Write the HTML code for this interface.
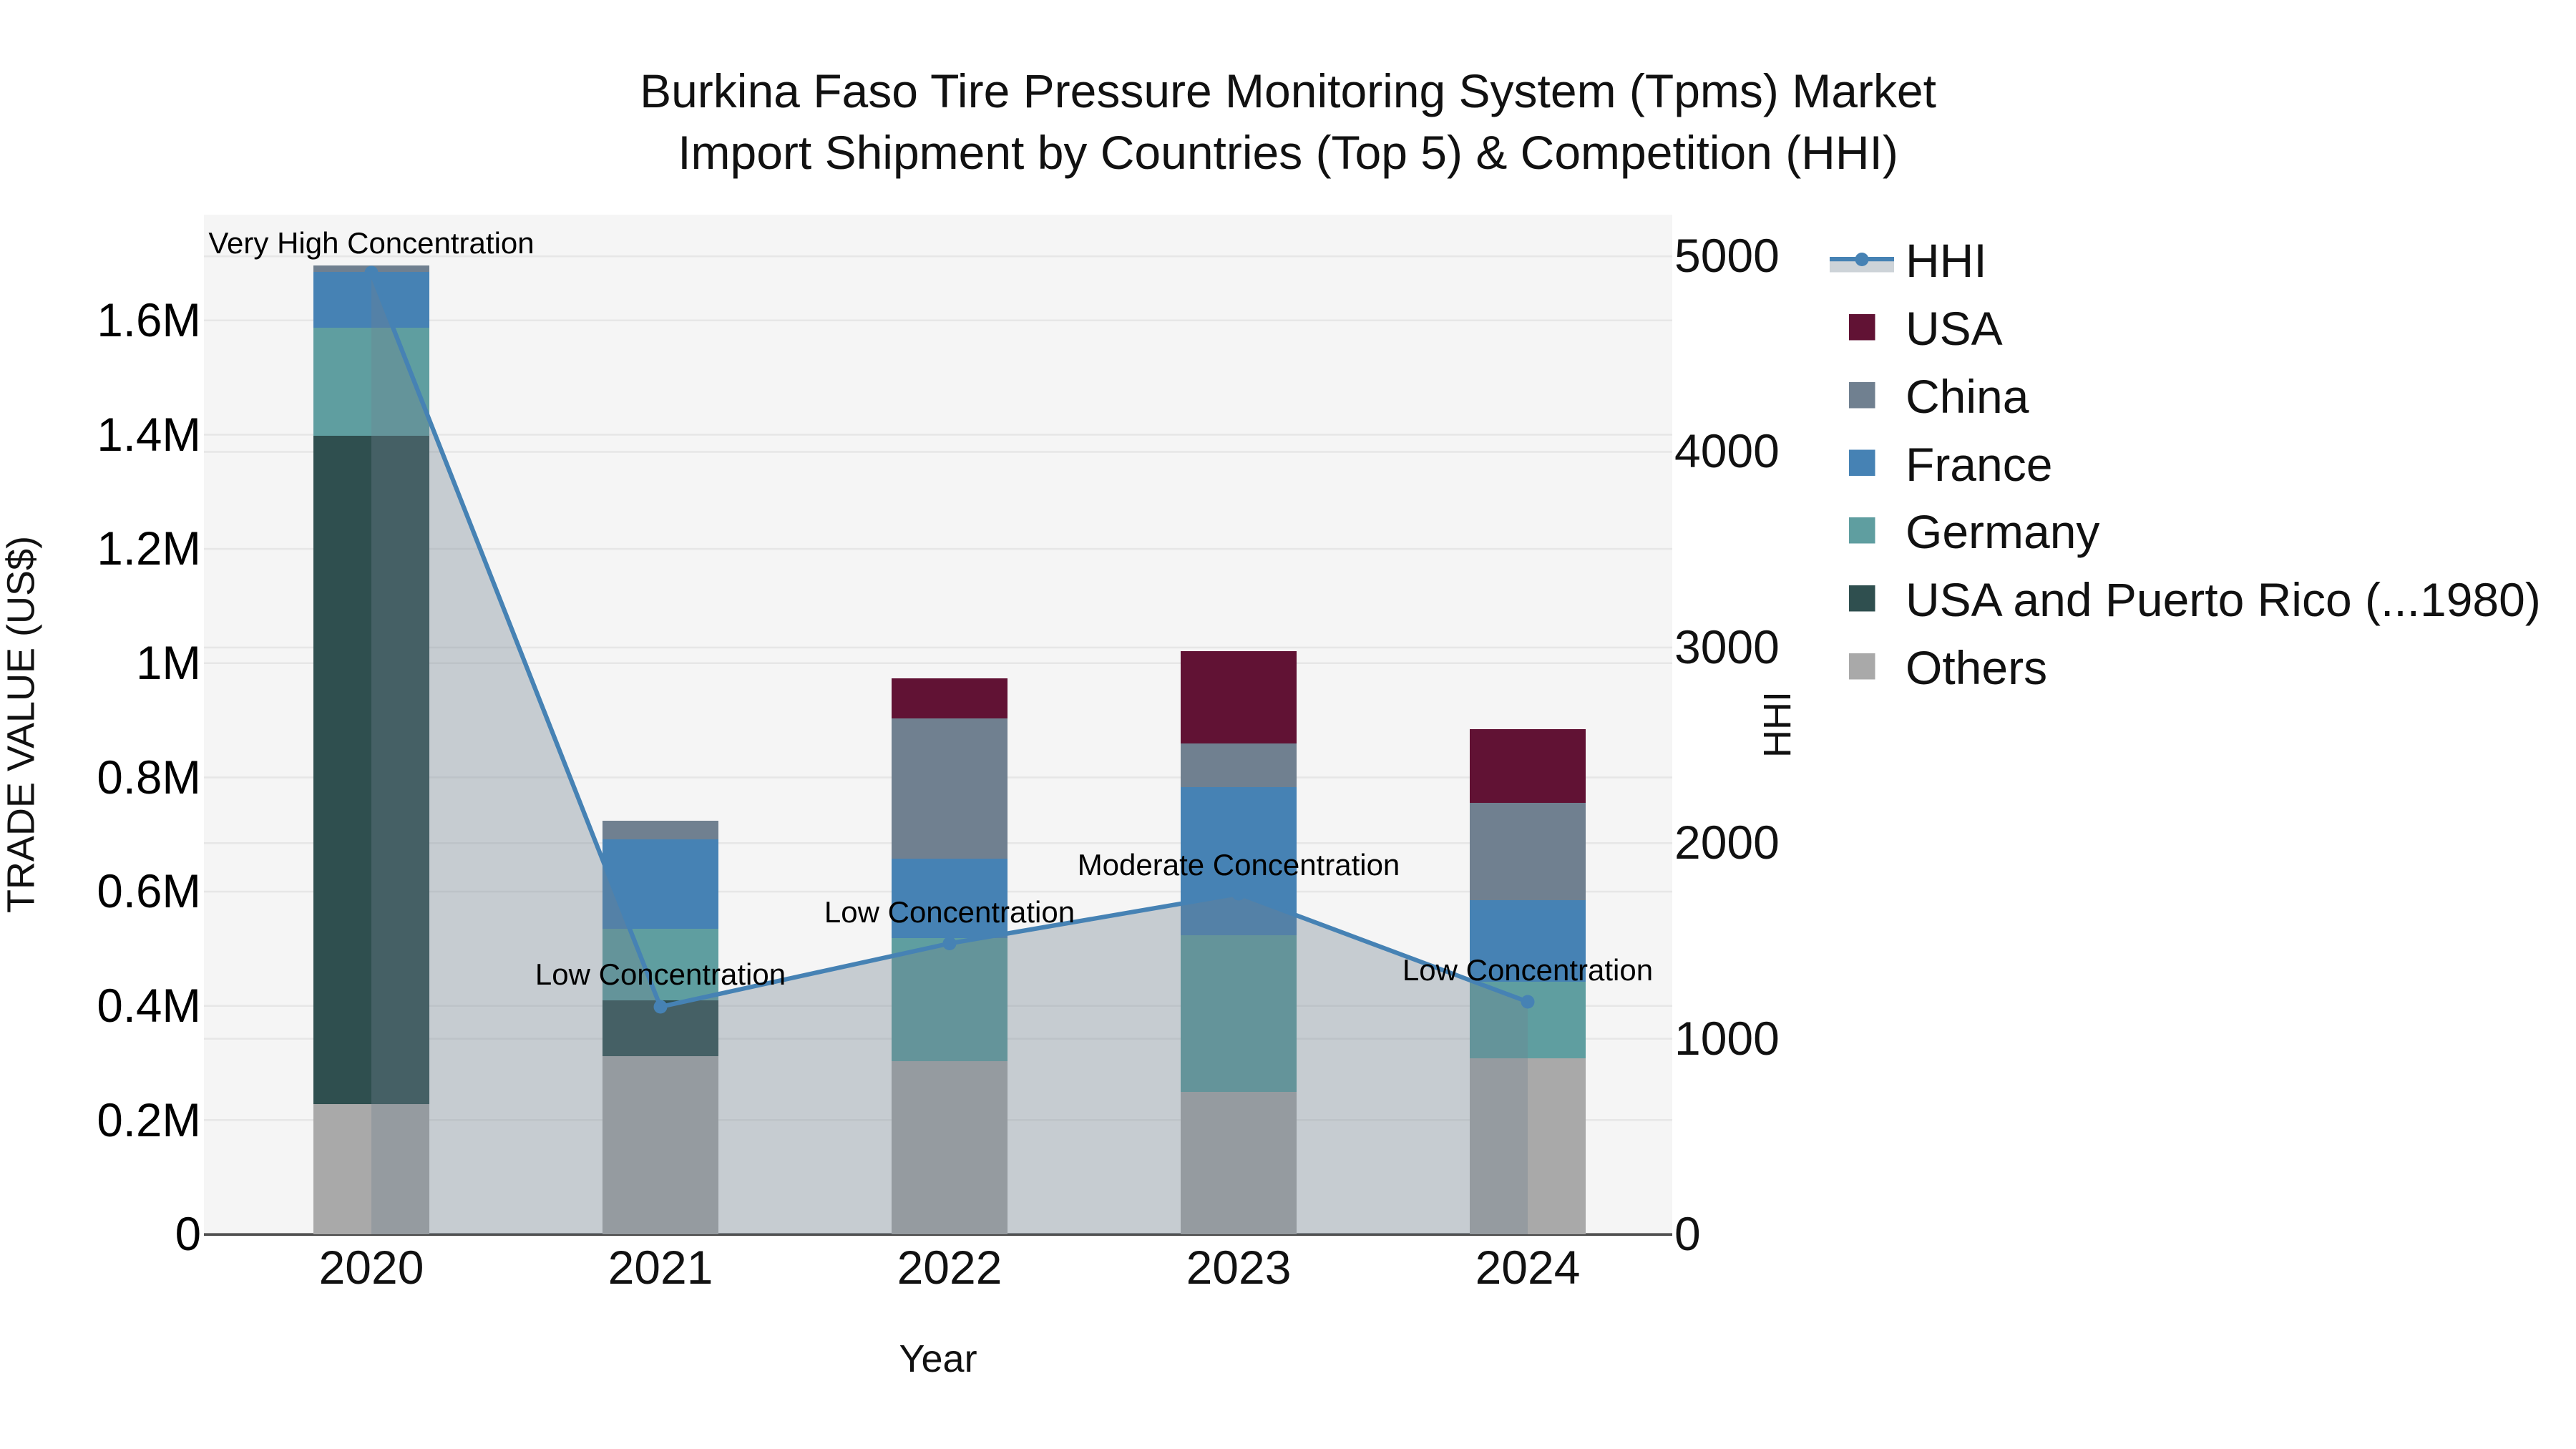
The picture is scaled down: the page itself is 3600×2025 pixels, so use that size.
<!DOCTYPE html>
<html lang="en">
<head>
<meta charset="utf-8">
<title>Burkina Faso Tire Pressure Monitoring System (Tpms) Market</title>
<style>
html,body{margin:0;padding:0;background:#fff;width:3600px;height:2025px;overflow:hidden}
svg{display:block}
text{font-family:"Liberation Sans",Arial,sans-serif;white-space:pre}
.t{font-size:66px;fill:#111}
.l{font-size:65.5px;fill:#000;text-anchor:end}
.c{text-anchor:middle}
.a{font-size:42px;fill:#000;text-anchor:middle}
.ax{font-size:54px;fill:#111;text-anchor:middle}
.ti{font-size:66px;fill:#111;text-anchor:middle}
</style>
</head>
<body>
<svg xmlns="http://www.w3.org/2000/svg" width="3600" height="2025" viewBox="0 0 3600 2025">
<rect width="3600" height="2025" fill="#fff"/>
<rect x="285" y="300" width="2052" height="1427" fill="#f5f5f5"/>

<!-- grid -->
<g fill="#e6e6e6">
<rect x="285" y="357" width="2052" height="2.5"/>
<rect x="285" y="446.5" width="2052" height="2.5"/>
<rect x="285" y="606.2" width="2052" height="2.5"/>
<rect x="285" y="630.2" width="2052" height="2.5"/>
<rect x="285" y="765.8" width="2052" height="2.5"/>
<rect x="285" y="903.7" width="2052" height="2.5"/>
<rect x="285" y="925.5" width="2052" height="2.5"/>
<rect x="285" y="1085.2" width="2052" height="2.5"/>
<rect x="285" y="1177" width="2052" height="2.5"/>
<rect x="285" y="1244.8" width="2052" height="2.5"/>
<rect x="285" y="1404.5" width="2052" height="2.5"/>
<rect x="285" y="1450.4" width="2052" height="2.5"/>
<rect x="285" y="1564" width="2052" height="2.5"/>
</g>
<rect x="285" y="1723" width="2052" height="2" fill="#777"/>
<rect x="285" y="1725" width="2052" height="2" fill="#444"/>

<!-- bars -->
<g shape-rendering="crispEdges">
<!-- 2020 -->
<rect x="438" y="371" width="162" height="9" fill="#708090"/>
<rect x="438" y="380" width="162" height="78" fill="#4682b4"/>
<rect x="438" y="458" width="162" height="151" fill="#5f9ea0"/>
<rect x="438" y="609" width="162" height="934" fill="#2f4f4f"/>
<rect x="438" y="1543" width="162" height="182" fill="#a9a9a9"/>
<!-- 2021 -->
<rect x="842" y="1147" width="162" height="26" fill="#708090"/>
<rect x="842" y="1173" width="162" height="125" fill="#4682b4"/>
<rect x="842" y="1298" width="162" height="100" fill="#5f9ea0"/>
<rect x="842" y="1398" width="162" height="78" fill="#2f4f4f"/>
<rect x="842" y="1476" width="162" height="249" fill="#a9a9a9"/>
<!-- 2022 -->
<rect x="1246" y="948" width="162" height="56" fill="#611234"/>
<rect x="1246" y="1004" width="162" height="196" fill="#708090"/>
<rect x="1246" y="1200" width="162" height="111" fill="#4682b4"/>
<rect x="1246" y="1311" width="162" height="172" fill="#5f9ea0"/>
<rect x="1246" y="1483" width="162" height="242" fill="#a9a9a9"/>
<!-- 2023 -->
<rect x="1650" y="910" width="162" height="129" fill="#611234"/>
<rect x="1650" y="1039" width="162" height="61" fill="#708090"/>
<rect x="1650" y="1100" width="162" height="207" fill="#4682b4"/>
<rect x="1650" y="1307" width="162" height="219" fill="#5f9ea0"/>
<rect x="1650" y="1526" width="162" height="199" fill="#a9a9a9"/>
<!-- 2024 -->
<rect x="2054" y="1019" width="162" height="103" fill="#611234"/>
<rect x="2054" y="1122" width="162" height="136" fill="#708090"/>
<rect x="2054" y="1258" width="162" height="114" fill="#4682b4"/>
<rect x="2054" y="1372" width="162" height="107" fill="#5f9ea0"/>
<rect x="2054" y="1479" width="162" height="246" fill="#a9a9a9"/>
</g>

<!-- HHI area + line -->
<path d="M519 381 L923 1407 L1327 1318.5 L1731 1249 L2135 1400 L2135 1725 L519 1725 Z" fill="#708090" fill-opacity="0.35"/>
<path d="M519 381 L923 1407 L1327 1318.5 L1731 1249 L2135 1400" fill="none" stroke="#4682b4" stroke-width="6.2" stroke-linejoin="round"/>
<g fill="#4682b4">
<circle cx="519" cy="381" r="9.5"/>
<circle cx="923" cy="1407" r="9.5"/>
<circle cx="1327" cy="1318.5" r="9.5"/>
<circle cx="1731" cy="1249" r="9.5"/>
<circle cx="2135" cy="1400" r="9.5"/>
</g>

<!-- annotations -->
<text class="a" x="519" y="354">Very High Concentration</text>
<text class="a" x="923" y="1376">Low Concentration</text>
<text class="a" x="1327" y="1289">Low Concentration</text>
<text class="a" x="1731" y="1223">Moderate Concentration</text>
<text class="a" x="2135" y="1370">Low Concentration</text>

<!-- left ticks -->
<text class="l" x="281" y="470">1.6M</text>
<text class="l" x="281" y="630">1.4M</text>
<text class="l" x="281" y="789">1.2M</text>
<text class="l" x="281" y="949">1M</text>
<text class="l" x="281" y="1109">0.8M</text>
<text class="l" x="281" y="1268">0.6M</text>
<text class="l" x="281" y="1428">0.4M</text>
<text class="l" x="281" y="1588">0.2M</text>
<text class="l" x="281" y="1747">0</text>

<!-- right ticks -->
<text class="t" x="2340" y="380">5000</text>
<text class="t" x="2340" y="653">4000</text>
<text class="t" x="2340" y="927">3000</text>
<text class="t" x="2340" y="1200">2000</text>
<text class="t" x="2340" y="1474">1000</text>
<text class="t" x="2340" y="1747">0</text>

<!-- x ticks -->
<text class="t c" x="519" y="1794">2020</text>
<text class="t c" x="923" y="1794">2021</text>
<text class="t c" x="1327" y="1794">2022</text>
<text class="t c" x="1731" y="1794">2023</text>
<text class="t c" x="2135" y="1794">2024</text>

<!-- axis titles -->
<text class="ax" x="1311" y="1917">Year</text>
<text class="ax" transform="translate(47.7,1012.5) rotate(-90)">TRADE VALUE (US$)</text>
<text class="ax" transform="translate(2502,1012.5) rotate(-90)">HHI</text>

<!-- title -->
<text class="ti" x="1800" y="150">Burkina Faso Tire Pressure Monitoring System (Tpms) Market</text>
<text class="ti" x="1800" y="236">Import Shipment by Countries (Top 5) &amp; Competition (HHI)</text>

<!-- legend -->
<rect x="2557" y="362" width="90" height="18.5" fill="#708090" fill-opacity="0.35"/>
<rect x="2557" y="359" width="90" height="6.2" fill="#4682b4"/>
<circle cx="2602" cy="362.5" r="9.5" fill="#4682b4"/>
<g shape-rendering="crispEdges">
<rect x="2584" y="439" width="36.5" height="36.5" fill="#611234"/>
<rect x="2584" y="534" width="36.5" height="36.5" fill="#708090"/>
<rect x="2584" y="628.5" width="36.5" height="36.5" fill="#4682b4"/>
<rect x="2584" y="723" width="36.5" height="36.5" fill="#5f9ea0"/>
<rect x="2584" y="818" width="36.5" height="36.5" fill="#2f4f4f"/>
<rect x="2584" y="913" width="36.5" height="36.5" fill="#a9a9a9"/>
</g>
<text class="t" x="2663" y="387">HHI</text>
<text class="t" x="2663" y="482">USA</text>
<text class="t" x="2663" y="577">China</text>
<text class="t" x="2663" y="672">France</text>
<text class="t" x="2663" y="766">Germany</text>
<text class="t" x="2663" y="861">USA and Puerto Rico (...1980)</text>
<text class="t" x="2663" y="956">Others</text>
</svg>
</body>
</html>
